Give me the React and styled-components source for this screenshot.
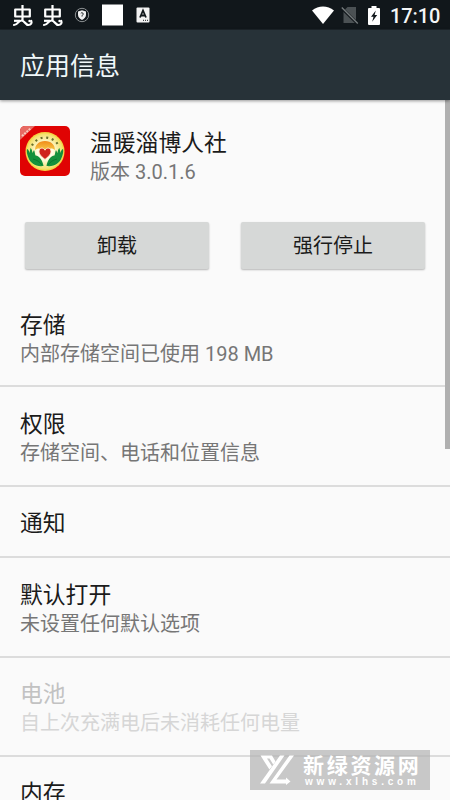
import React from 'react';
import styled, { createGlobalStyle } from 'styled-components';

const GlobalStyle = createGlobalStyle`
  * {
    box-sizing: border-box;
  }

  body {
    margin: 0;
    overflow: hidden;
    background: #fafafa;
    font-family: Roboto, "Noto Sans CJK SC", sans-serif;
  }
`

const Screen = styled.div`
  position: relative;
  display: flex;
  flex-direction: column;
  width: 450px;
  height: 800px;
  overflow: hidden;
  background: #fafafa;
`

const StatusBar = styled.div`
  flex: none;
  display: flex;
  align-items: center;
  justify-content: space-between;
  height: 30px;
  padding: 1px 10px 0 12px;
  background: #11171b;
  border-bottom: 1px solid #1c2429;
`

const StatusGroup = styled.div`
  display: flex;
  align-items: center;
  height: 28px;
`

const StatusIcon = styled.svg`
  display: block;
  flex: none;
  margin-right: ${props => props.$gap || 0}px;
`

const Clock = styled.div`
  width: 50px;
  padding-top: 1px;
  font-size: 20px;
  font-weight: 500;
  line-height: 28px;
  letter-spacing: -0.1px;
  color: #f4f6f6;
`

const AppBar = styled.div`
  flex: none;
  position: relative;
  z-index: 1;
  height: 70px;
  padding: 2px 0 0 20px;
  background: #273238;
  box-shadow: 0 1px 3px rgba(0, 0, 0, 0.4);
  font-size: 25px;
  line-height: 70px;
  color: #f0f8fa;
`

const Content = styled.div`
  flex: none;
  display: flex;
  flex-direction: column;
`

const AppHeader = styled.div`
  display: flex;
  height: 122px;
  padding: 26px 20px 0;
`

const AppText = styled.div`
  margin: 2px 0 0 20px;
`

const Title = styled.div`
  font-size: 22.8px;
  line-height: 31px;
  color: ${props => props.$disabled ? '#c2c2c2' : '#1b1b1b'};
`

const Summary = styled.div`
  font-size: 20px;
  line-height: 26px;
  color: ${props => props.$disabled ? '#d6d6d6' : '#767676'};
`

const Buttons = styled.div`
  display: flex;
  gap: 32px;
  height: 64px;
  padding: 0 25px 17px;
`

const Button = styled.button`
  flex: 1;
  padding: 2px 0 0;
  border: 0;
  border-radius: 2px;
  background: #d6d8d7;
  box-shadow: 0 1px 2px rgba(0, 0, 0, 0.28);
  font-family: inherit;
  font-size: 20px;
  line-height: 45px;
  color: #1b1b1b;
`

const Row = styled.div`
  height: ${props => props.$height}px;
  padding: ${props => props.$top || 22}px 20px 0;
  border-bottom: 2px solid #dcdcdc;
`

const Scrollbar = styled.div`
  position: absolute;
  top: 100px;
  right: 0;
  width: 5px;
  height: 349px;
  background: #b0b0b0;
`

const Watermark = styled.div`
  position: absolute;
  left: 250px;
  top: 750px;
  display: flex;
  width: 180px;
  height: 40px;
  padding-left: 9px;
  background: rgba(180, 180, 180, 0.72);
  color: #fff;
`

const WatermarkText = styled.div`
  margin-left: 6px;
  white-space: nowrap;
`

const WatermarkName = styled.div`
  height: 26px;
  font-size: 21px;
  font-weight: 700;
  line-height: 32px;
  letter-spacing: 2.7px;
`

const WatermarkUrl = styled.div`
  padding-left: 2px;
  font-family: "Liberation Sans", sans-serif;
  font-size: 10px;
  font-weight: 700;
  line-height: 12px;
  letter-spacing: 3.8px;
`

const rows = [
  { title: '存储', summary: '内部存储空间已使用 198 MB', height: 101, top: 24 },
  { title: '权限', summary: '存储空间、电话和位置信息', height: 100 },
  { title: '通知', height: 71, top: 21 },
  { title: '默认打开', summary: '未设置任何默认选项', height: 100, top: 22 },
  { title: '电池', summary: '自上次充满电后未消耗任何电量', height: 99, disabled: true, top: 21 },
  { title: '内存', height: 100, top: 21 },
]

const BugIcon = ({ gap }) => (
  <StatusIcon $gap={gap} width="22" height="24" viewBox="0 0 22 24" fill="none" stroke="#fff" strokeWidth="2.2">
    <path d="M3.2 6.5h14.600v7H3.200zM10.500 2v15.500" strokeLinejoin="round" />
    <path d="M2 22c4 0 4-4.500 7.500-4.500s3.500 4.500 7 4.500c2.500 0 3.500-2 2.800-4" strokeLinecap="round" />
    <path d="M2 17.800h6" />
    <circle cx="17.600" cy="18" r="1.300" fill="#fff" stroke="none" />
  </StatusIcon>
)

const ShieldIcon = () => (
  <StatusIcon $gap={12} width="16" height="16" viewBox="0 0 16 16" fill="none">
    <circle cx="8" cy="8" r="6.7" stroke="#8c9092" />
    <path d="M8 3.3l4 1.3v3.2c0 2.4-1.6 4-4 5.2-2.4-1.2-4-2.8-4-5.2V4.6z" fill="#f1f1f1" />
    <path d="M6.8 6.4c.4-1 2.4-.8 2.4.5C9.2 8 8 7.8 8 9.5" stroke="#11171b" />
  </StatusIcon>
)

const LetterIcon = () => (
  <StatusIcon width="14" height="16" viewBox="0 0 14 16">
    <rect x="0.500" y="0.500" width="13" height="15" rx="1" fill="#f3f3f3" />
    <path d="M4 10.500L7 3.500l3 7M5 8.500h4" fill="none" stroke="#11171b" strokeWidth="1.800" />
    <path d="M7 13.300h5" stroke="#11171b" strokeDasharray="1 1" />
  </StatusIcon>
)

const SquareIcon = () => (
  <StatusIcon $gap={12} width="22" height="22" viewBox="0 0 22 22">
    <path d="M0 .5h21v21H0z" fill="#fff" />
  </StatusIcon>
)

const WifiIcon = () => (
  <StatusIcon $gap={7} width="22" height="18" viewBox="0 0 22 18">
    <path d="M0 4.500C6.500-.9 15.500-.9 22 4.500L11 18z" fill="#fff" />
  </StatusIcon>
)

const NoSimIcon = () => (
  <StatusIcon $gap={9} width="18" height="18" viewBox="0 0 18 18">
    <path d="M2.500 5l4-4H15v16H2.500z" fill="#4b5154" />
    <path d="M0 1.500l16.500 16" stroke="#11171b" strokeWidth="3" />
    <path d="M.8 1.500l16 16" stroke="#777c7e" strokeWidth="1.300" />
  </StatusIcon>
)

const BatteryIcon = () => (
  <StatusIcon $gap={10} width="12" height="19" viewBox="0 0 12 19">
    <path d="M3.500 0h5v2H11q1 0 1 1v15q0 1-1 1H1q-1 0-1-1V3q0-1 1-1h2.500z" fill="#fff" />
    <path d="M7.800 4.500L3 10.800h2.500l-1.300 5L9.200 9H6.600z" fill="#11171b" />
  </StatusIcon>
)

const AppIcon = () => (
  <svg width="50" height="50" viewBox="0 0 50 50">
    <defs>
      <clipPath id="app-shape">
        <rect width="50" height="50" rx="5" />
      </clipPath>
      <radialGradient id="app-disc">
        <stop offset="0.400" stopColor="#fffde9" />
        <stop offset="1" stopColor="#f3df63" />
      </radialGradient>
      <linearGradient id="app-sun" x1="0" y1="0" x2="0" y2="1">
        <stop stopColor="#f08a18" />
        <stop offset="1" stopColor="#f7c947" />
      </linearGradient>
    </defs>
    <g clipPath="url(#app-shape)">
      <path fill="#e00303" d="M0 0h50v50H0z" />
      <path fill="#e76a63" d="M1 0h14L0 14V1z" />
      <path d="M2 10L11 2" stroke="#f8c9bd" strokeWidth="2" strokeDasharray="2 1" />
      <circle cx="25" cy="25.500" r="19.500" fill="#f5d443" />
      <circle cx="25" cy="25.500" r="18.200" fill="url(#app-disc)" />
      <path d="M12 19.500A15 15 0 0 1 39 20.500" fill="none" stroke="#68702b" strokeWidth="2.200" strokeDasharray="2 3.700" />
      <path d="M15 24c0-5 3.500-9 10-9s10 4 10 9c-4-3-6-1-10 0-4-1-6-3-10 0z" fill="url(#app-sun)" />
      <path d="M25 33.500c-3-2.500-6-5.100-6-8 0-4 4.500-4.500 6-1.300 1.500-3.200 6-2.700 6 1.300 0 2.900-3 5.500-6 8z" fill="#cf241c" stroke="#fff1c8" />
      <path d="M7 23c1.500.5 2 2 2.500 4l1-5c1.500 1 1.700 3 2 5l1.500-3c1 2 .8 4 1.500 5.500 4 .5 7 4.500 8 10.500-8 1-13-3-15-8C7 28.500 6.500 25.500 7 23z" fill="#14913c" />
      <path d="M43 23c-1.500.5-2 2-2.500 4l-1-5c-1.500 1-1.700 3-2 5L36 24c-1 2-.8 4-1.500 5.500-4 .5-7 4.500-8 10.500 8 1 13-3 15-8 1.500-3.500 2-6.500 1.500-9z" fill="#14913c" />
      <path d="M13 33c4 1 7 3 9 6M37 33c-4 1-7 3-9 6" fill="none" stroke="#087a2f" strokeWidth="1" />
    </g>
  </svg>
)

const WatermarkLogo = () => (
  <svg width="38" height="40" viewBox="0 0 38 40" fill="#fff">
    <path d="M1.500 5.500H13l3.500 6-2.300 3L10.500 8.500H8l5 7.800-2.600 3.300z" />
    <path d="M21 5.500h4.500L6 33.500H1z" />
    <path d="M30.500 5.500H35L17.500 29.500H27V27.500l4.500 4-4.500 3.500v-1.500H10.500z" />
  </svg>
)

const App = () => {
  return (
    <Screen>
      <GlobalStyle />
      <StatusBar>
        <StatusGroup>
          <BugIcon gap={8} />
          <BugIcon gap={10} />
          <ShieldIcon />
          <SquareIcon />
          <LetterIcon />
        </StatusGroup>
        <StatusGroup>
          <WifiIcon />
          <NoSimIcon />
          <BatteryIcon />
          <Clock>17:10</Clock>
        </StatusGroup>
      </StatusBar>
      <AppBar>应用信息</AppBar>
      <Content>
        <AppHeader>
          <AppIcon />
          <AppText>
            <Title>温暖淄博人社</Title>
            <Summary>版本 3.0.1.6</Summary>
          </AppText>
        </AppHeader>
        <Buttons>
          <Button>卸载</Button>
          <Button>强行停止</Button>
        </Buttons>
        {rows.map(row => (
          <Row key={row.title} $height={row.height} $top={row.top}>
            <Title $disabled={row.disabled}>{row.title}</Title>
            {row.summary && <Summary $disabled={row.disabled}>{row.summary}</Summary>}
          </Row>
        ))}
      </Content>
      <Scrollbar />
      <Watermark>
        <WatermarkLogo />
        <WatermarkText>
          <WatermarkName>新绿资源网</WatermarkName>
          <WatermarkUrl>www.xlhs.com</WatermarkUrl>
        </WatermarkText>
      </Watermark>
    </Screen>
  )
}

export default App;
